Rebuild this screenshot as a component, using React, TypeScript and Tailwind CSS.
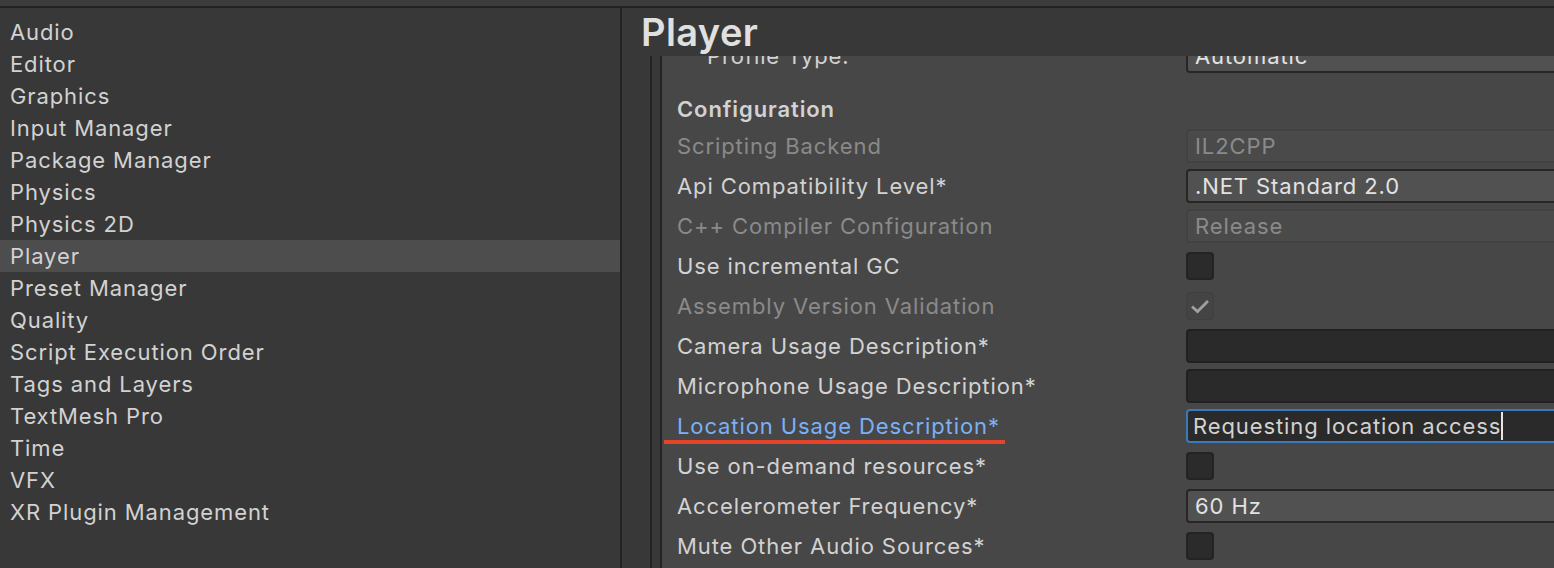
import React from "react";

const settings = [
  "Audio",
  "Editor",
  "Graphics",
  "Input Manager",
  "Package Manager",
  "Physics",
  "Physics 2D",
  "Player",
  "Preset Manager",
  "Quality",
  "Script Execution Order",
  "Tags and Layers",
  "TextMesh Pro",
  "Time",
  "VFX",
  "XR Plugin Management",
];

type Field =
  | { kind: "dropdown"; value: string; disabled?: boolean }
  | { kind: "text"; value?: string; focused?: boolean }
  | { kind: "check"; checked?: boolean; disabled?: boolean };

interface Row {
  label: string;
  disabled?: boolean;
  active?: boolean;
  field: Field;
}

const rows: Row[] = [
  { label: "Scripting Backend", disabled: true, field: { kind: "dropdown", value: "IL2CPP", disabled: true } },
  { label: "Api Compatibility Level*", field: { kind: "dropdown", value: ".NET Standard 2.0" } },
  { label: "C++ Compiler Configuration", disabled: true, field: { kind: "dropdown", value: "Release", disabled: true } },
  { label: "Use incremental GC", field: { kind: "check" } },
  { label: "Assembly Version Validation", disabled: true, field: { kind: "check", checked: true, disabled: true } },
  { label: "Camera Usage Description*", field: { kind: "text" } },
  { label: "Microphone Usage Description*", field: { kind: "text" } },
  { label: "Location Usage Description*", active: true, field: { kind: "text", value: "Requesting location access", focused: true } },
  { label: "Use on-demand resources*", field: { kind: "check" } },
  { label: "Accelerometer Frequency*", field: { kind: "dropdown", value: "60 Hz" } },
  { label: "Mute Other Audio Sources*", field: { kind: "check" } },
];

const FieldView = ({ field }: { field: Field }) => {
  if (field.kind === "check") {
    return (
      <div
        className={
          field.disabled
            ? "shrink-0 w-[28px] h-[28px] rounded-[4px] border border-[#3f3f3f] bg-[#444444] flex items-center justify-center"
            : "shrink-0 w-[28px] h-[28px] rounded-[4px] border-2 border-[#232323] bg-[#2b2b2b]"
        }
      >
        {field.checked && (
          <svg width="20" height="20" viewBox="0 0 20 20">
            <path d="M2 10.5 L7.5 15.5 L18 5" fill="none" stroke="#a0a0a0" strokeWidth="2.8" />
          </svg>
        )}
      </div>
    );
  }
  if (field.kind === "text") {
    return (
      <div
        className={
          field.focused
            ? "shrink-0 w-[420px] h-[34px] rounded-[4px] border-2 border-[#3a79bb] bg-[#2a2a2a] flex items-center pl-[5px] text-[#d2d2d2]"
            : "shrink-0 w-[420px] h-[34px] rounded-[4px] border-2 border-[#212121] bg-[#2a2a2a]"
        }
      >
        {field.value}
        {field.focused && <span className="w-[2px] h-[28px] bg-[#e6e6e6]" />}
      </div>
    );
  }
  return (
    <div
      className={
        field.disabled
          ? "shrink-0 w-[420px] h-[34px] rounded-[4px] border-2 border-[#424242] bg-[#4a4a4a] flex items-center pl-[7px] text-[#8a8a8a]"
          : "shrink-0 w-[420px] h-[34px] rounded-[4px] border-2 border-[#262626] bg-[#515151] flex items-center pl-[7px] text-[#e2e2e2]"
      }
    >
      {field.value}
    </div>
  );
};

export default function App() {
  return (
    <div
      className="w-[1554px] h-[568px] overflow-hidden bg-[#383838] flex flex-col text-[22px] tracking-[0.9px] text-[#d2d2d2]"
      style={{ fontFamily: "Inter, 'Noto Sans', sans-serif" }}
    >
      <div className="h-[6px] bg-[#3c3c3c]" />
      <div className="h-[2px] bg-[#232323]" />
      <div className="flex flex-1 min-h-0">
        <div className="w-[620px] shrink-0 pt-[8px] flex flex-col">
          {settings.map((s) => (
            <div
              key={s}
              className={
                s === "Player"
                  ? "h-[32px] flex items-center pl-[10px] bg-[#4d4d4d]"
                  : "h-[32px] flex items-center pl-[10px]"
              }
            >
              {s}
            </div>
          ))}
        </div>
        <div className="w-[2px] shrink-0 bg-[#232323]" />
        <div className="flex-1 flex flex-col min-w-0">
          <div className="h-[48px] shrink-0 flex items-center pl-[19px] text-[38px] font-semibold text-[#e0e0e0] tracking-[0.4px]">
            Player
          </div>
          <div className="flex flex-1 min-h-0">
            <div className="w-[28px] shrink-0" />
            <div className="w-[2px] shrink-0 bg-[#232323]" />
            <div className="w-[8px] shrink-0" />
            <div className="w-[2px] shrink-0 bg-[#232323]" />
            <div className="flex-1 bg-[#474747] overflow-hidden">
              <div className="-mt-[20px]">
                <div className="h-[40px] flex items-center">
                  <div className="w-[524px] shrink-0 pl-[45px]">Profile Type:</div>
                  <FieldView field={{ kind: "dropdown", value: "Automatic" }} />
                </div>
                <div className="h-[50px] pt-[18px] pl-[15px] leading-[30px] font-semibold text-[#d2d2d2]">
                  Configuration
                </div>
                {rows.map((r) => (
                  <div key={r.label} className="h-[40px] flex items-center">
                    <div className="w-[524px] shrink-0 pl-[15px] relative">
                      <span
                        className={
                          r.active ? "text-[#7cb0f5]" : r.disabled ? "text-[#8a8a8a]" : "text-[#d2d2d2]"
                        }
                      >
                        {r.label}
                      </span>
                      {r.active && (
                        <div className="absolute left-[2px] top-[30px] w-[341px] h-[4px] bg-[#e5432a]" />
                      )}
                    </div>
                    <FieldView field={r.field} />
                  </div>
                ))}
              </div>
            </div>
          </div>
        </div>
      </div>
    </div>
  );
}
